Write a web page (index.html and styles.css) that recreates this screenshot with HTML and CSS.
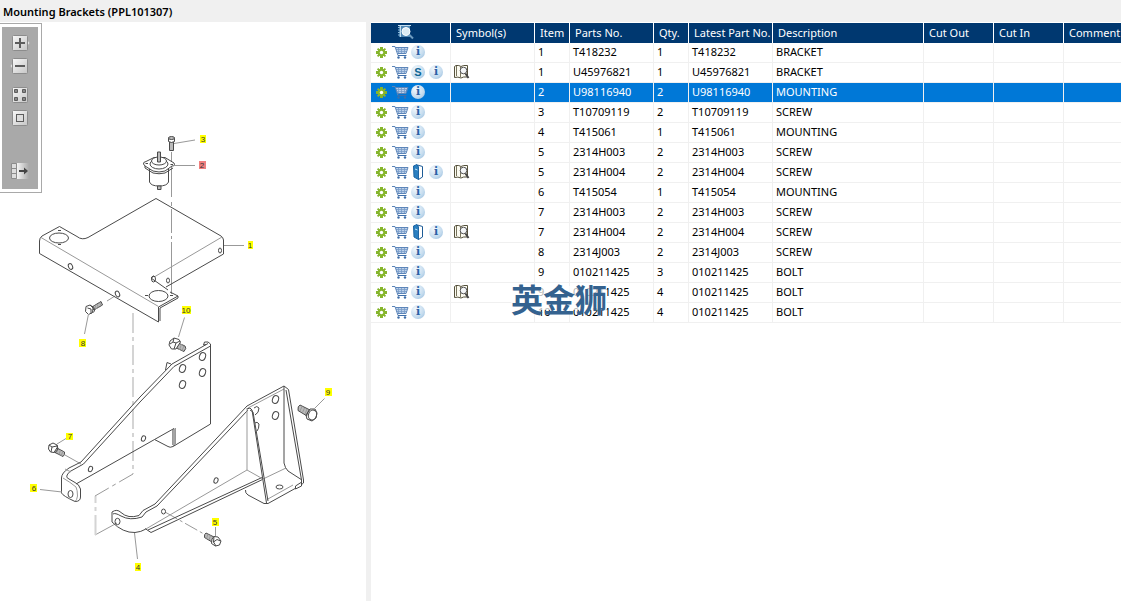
FILE: index.html
```
<!DOCTYPE html>
<html lang="en">
<head>
    <meta charset="UTF-8">
    <meta name="viewport" content="width=device-width, initial-scale=1.0">
    <title>Mounting Brackets (PPL101307)</title>
    <link rel="stylesheet" href="styles.css">
</head>
<body>
    <!-- Icon set -->
    <svg class="icon-set" aria-hidden="true">
        <defs>
            <linearGradient id="btnFill" x1="0" y1="0" x2="1" y2="1">
                <stop offset="0" stop-color="#f8f8f8"/>
                <stop offset="1" stop-color="#c6c6c6"/>
            </linearGradient>
            <linearGradient id="fadeFill" x1="0" y1="0" x2="1" y2="0">
                <stop offset="0" stop-color="#f4f4f4"/>
                <stop offset="1" stop-color="#a9a9a9"/>
            </linearGradient>
        </defs>
        <symbol id="gear" viewBox="0 0 18 16">
            <g fill="#86b52c">
                <rect x="7" y="3" width="3" height="11"/>
                <rect x="3" y="7" width="11" height="3"/>
                <rect x="7.500" y="3" width="2" height="11" transform="rotate(45 8.5 8.5)"/>
                <rect x="7.500" y="3" width="2" height="11" transform="rotate(-45 8.5 8.5)"/>
                <circle cx="8.5" cy="8.5" r="3.8"/>
            </g>
            <circle class="gear-hole" cx="8.5" cy="8.5" r="1.7"/>
        </symbol>
        <symbol id="cart" viewBox="0 0 18 16">
            <path d="M4.500 3.500H16.500L14.500 9H6.500Z" fill="#bcd0ea"/>
            <path d="M5 5.500H16M5.500 7.500H15.500M7.500 3.500V9M10.500 3.500V9M13.500 3.500V9" fill="none" stroke="#7a9cc8" stroke-width=".8"/>
            <path d="M1 2.500H4L7 11.500M4.500 3.500H17L15 9.500H6.500" fill="none" stroke="#5c85b9"/>
            <path d="M7 11.500H15.500" fill="none" stroke="#3f6ea8"/>
            <circle cx="7.500" cy="13.500" r="1.200" fill="#3f6ea8"/>
            <circle cx="14" cy="13.500" r="1.200" fill="#3f6ea8"/>
        </symbol>
        <symbol id="book" viewBox="0 0 18 16">
            <path d="M8.500 1L13.500 2.500V13L9.500 15.500Z" fill="#fff" stroke="#1d5b96"/>
            <path d="M4.500 2L8 .500 9.500 3V15.500L5 13Z" fill="#2a7fc0" stroke="#1e66a5"/>
            <path d="M6 5L8.500 6" stroke="#bfe0f5"/>
        </symbol>
        <symbol id="lookup" viewBox="0 0 18 16">
            <path d="M1.500 2.500L3 1.500Q6 1 8 2.500Q10 1 14.500 1.500V13Q10 12.500 8 14Q5 12.500 1.500 13.500Z" fill="#fbfaf0" stroke="#55513c"/>
            <path d="M3.500 2V12M7.500 3V13" fill="none" stroke="#77735c"/>
            <circle cx="10.500" cy="6.500" r="3.300" fill="#f3f5f7" stroke="#555"/>
            <path d="M12.500 9.500L15.500 14" stroke="#444" stroke-width="2"/>
        </symbol>
        <symbol id="search" viewBox="0 0 18 16">
            <path d="M2 1H13V13H2Z" fill="#4f87b5"/>
            <path d="M1 1.500H14M3.500 2V13" stroke="#c3dced"/>
            <path d="M1 3.500H3M1 6H3M1 8.500H3M1 11H3" stroke="#8bb8d8"/>
            <circle cx="9" cy="7.500" r="4" fill="#dbeaf4" stroke="#fff"/>
            <path d="M12 10.500L16 14.500" stroke="#6f9cc0" stroke-width="2"/>
        </symbol>
    </svg>

    <header class="title-bar">
        <h1>Mounting Brackets (PPL101307)</h1>
    </header>

    <main class="viewer">
        <!-- Drawing -->
        <section class="drawing-pane">
            <svg class="drawing" viewBox="0 22 366 579" role="img" aria-label="Exploded view">
                <!-- centre lines -->
                <g class="centre">
                    <path d="M171.500 152V197M171.500 202V206M171.500 209V233M171.500 236V239M171.500 242V294"/>
                    <path d="M107 301L115 296M95 535L117 523"/>
                    <path d="M65 455L81 464"/>
                    <path d="M165 512L204 534" stroke-dasharray="14 3 3 3"/>
                    <path class="centre-wide" d="M133 313V474" stroke-dasharray="20 4 4 4"/>
                    <path class="centre-wide" d="M95.500 535V496" stroke-dasharray="20 4 4 4"/>
                    <path d="M133 474L95 496" stroke-dasharray="16 4 4 4"/>
                </g>

                <!-- 1: bracket plate -->
                <path class="line" d="M166 287L223.500 254V240Q223 237 221 236L156 198.500L88 237.500Q82 240.500 77 236.500L59.500 226.500L42 236Q39.500 238 39.500 241V253.500L158.500 322V307L178 296L170 292"/>
                <path class="thin" d="M41 237.500L158.500 306.500M222 237L155 276.500"/>
                <path class="line" d="M151 278L168 290M151 278L154 276M178 296V298L160 308V321"/>
                <ellipse class="line" cx="59" cy="238" rx="9.500" ry="5"/>
                <ellipse class="line" cx="158.500" cy="296" rx="9.500" ry="5.500"/>
                <ellipse class="line" cx="153.500" cy="279" rx="2" ry="3"/>
                <ellipse class="line" cx="168" cy="280.500" rx="1.500" ry="2.500"/>
                <ellipse class="line" cx="220" cy="250.500" rx="1.500" ry="2.500"/>
                <ellipse class="line" cx="70.500" cy="266.500" rx="2" ry="3" transform="rotate(-25 70.500 266.500)"/>
                <ellipse class="line" cx="117.500" cy="294" rx="2" ry="3" transform="rotate(-25 117.500 294)"/>
                <path class="line" d="M58 230.500H61M58 244.500H61M145 295.500H148M170 295.500H173"/>

                <!-- 2: mounting -->
                <path class="line" d="M149.500 169V182Q151 186 159 186T168.500 182V169"/>
                <path class="solid" d="M143.500 164Q143 162 146 161.500L154 157.500H165L174 163Q175.500 166 172 166L165 171Q159 173 153 171L145 166Z"/>
                <path class="line" d="M145 166V168L153 173Q159 174.500 165 173L173 168"/>
                <ellipse class="solid" cx="159" cy="164" rx="9" ry="5"/>
                <ellipse class="solid" cx="159" cy="161" rx="7.500" ry="4"/>
                <path class="shaded" d="M157.500 152H160.500V162H157.500ZM157.500 186H161V189.500H157.500Z"/>
                <path class="line" d="M145.500 163.500H148M170.500 164.500H173"/>

                <!-- 3: socket screw -->
                <path class="shaded" d="M169.500 142H173.500V150.500H169.500Z"/>
                <path class="solid" d="M168.500 138V141.500Q171.500 143.500 174.500 141.500V138Z"/>
                <ellipse class="shaded" cx="171.500" cy="138" rx="3" ry="1.500"/>

                <!-- 8: screw -->
                <path class="shaded" d="M92 307L101 301.500L102.500 305L94 310Z"/>
                <path class="thin" d="M95 305L96.500 309M97 304L98.500 307.500M99.500 302.500L101 306"/>
                <path class="solid" d="M86 306.500L90 305L93 308L92.500 312.500L88.500 314.500L85.500 311.500Z"/>
                <path class="line" d="M90 305L94 307.500L94.500 311L92.500 313M87.500 308L91 309V314"/>

                <!-- 6: bracket -->
                <path class="line" d="M208 343.500L172 364L140 397L81 462L69 468Q61.500 473 61.500 478V493Q63 496 75 501.500Q80.500 501.500 80.500 497V489Q79 484 75 482.500L69 479Q64 477 70 471.500L83.500 464L140 402L174 366.500L210.500 346V424L173 446.500Q170 448 168 446.500L154.500 439.500L174 428.500V446"/>
                <path class="line" d="M154.500 439.500L76 484M206 344.500L203.500 345L204.500 342L208 342L210.500 344V346"/>
                <path class="thin" d="M63 478Q70 482 76 487Q77.500 490 77.500 496Q77 500 75 501.500M175.500 428V446M172.500 430V445M65 469L71 472"/>
                <path class="line" d="M165.500 370L167 362.500L171 364"/>
                <g class="line">
                    <ellipse cx="202.500" cy="356.500" rx="3" ry="4" transform="rotate(20 202.500 356.500)"/>
                    <ellipse cx="202.500" cy="372.500" rx="3" ry="4" transform="rotate(20 202.500 372.500)"/>
                    <ellipse cx="182.500" cy="368.500" rx="3" ry="4" transform="rotate(20 182.500 368.500)"/>
                    <ellipse cx="182.500" cy="384.500" rx="3" ry="4" transform="rotate(20 182.500 384.500)"/>
                    <ellipse cx="143.500" cy="438.500" rx="2" ry="2.800" transform="rotate(20 143.500 438.500)"/>
                    <ellipse cx="90.500" cy="469" rx="2" ry="2.800" transform="rotate(20 90.500 469)"/>
                    <ellipse cx="70.500" cy="494" rx="2.500" ry="3.500"/>
                </g>

                <!-- 10: bolt -->
                <path class="shaded" d="M176 342L185 346Q187 348 184 351.500L174 347Z"/>
                <path class="thin" d="M179 343L177 348.500M181.500 344L179.500 350M184 345.500L182 351"/>
                <path class="solid" d="M170 341L174 338L179 339.500L180.500 342L176 349L171.500 349L169 345Z"/>
                <path class="line" d="M174 338L173 342L170 344M173 342L176 343L180 341M176 343L174 349"/>

                <!-- 7: screw -->
                <path class="shaded" d="M55 447L64.500 452Q65 455 63 456.500L54 452Z"/>
                <path class="thin" d="M58 448.500L56.500 453M60.500 450L59 454.500M63 451L61 456"/>
                <path class="solid" d="M49 445L53 443L57 445L57.500 447L54 452.500L50.500 452L48.500 449Z"/>
                <path class="line" d="M49 445L52 447L57 446M52 447L51 452M57 445L58 449L55 453"/>

                <!-- 4: bracket -->
                <path class="line" d="M284 386L247 406L155 504L143 510.500L139 515.500Q128 519 121 512.500Q117 508.500 112 512V522Q123 533 135 532.500Q141 532 146 529"/>
                <path class="line" d="M248 410L157 506L146 512L142 517Q130 521 121 516Q115 512.500 113 514M145 528.500L151 532.500L262.500 479.500M148 530L262 477.500"/>
                <path class="thin" d="M145 529.500L247 470L263 479M247 408V470M248 408L284 389M263 479L286 468M267 499.500L293 485"/>
                <path class="line" d="M247 409L250 408L252 410L266.500 503M250 410L253 412L268 501M284 386V463Q285 468 288 471L302 480M284 386L288.500 389.500L303.500 480V483L301 485M286 390L301.500 480V486L295.500 489V486L301 482.500M245.500 490Q245 493 248 495L264 503.500H268L296 488"/>
                <ellipse class="line" cx="279.500" cy="487" rx="3.500" ry="2"/>
                <g class="line">
                    <ellipse cx="275.500" cy="399.500" rx="3" ry="4" transform="rotate(20 275.500 399.500)"/>
                    <ellipse cx="275.500" cy="415.500" rx="3" ry="4" transform="rotate(20 275.500 415.500)"/>
                    <path d="M254 408Q257 405 259 408Q259 413 255 415M255 423Q257 421 259 424Q259 429 257 431"/>
                    <ellipse cx="216" cy="480.500" rx="2" ry="2.800" transform="rotate(20 216 480.500)"/>
                    <ellipse cx="163.500" cy="511.500" rx="2" ry="2.500"/>
                    <ellipse cx="117.500" cy="521.500" rx="2.500" ry="3.200"/>
                </g>

                <!-- 9: bolt -->
                <path class="shaded" d="M300 405L310 410L307 416L298 410.500Q297.500 406 300 405Z"/>
                <path class="thin" d="M302 406.500L300 411M304.500 408L302.500 412.500M307 409L305 414"/>
                <path class="solid" d="M310 409L315 409L317 413L316 418L312 421L307 419L306 415Z"/>
                <path class="line" d="M310 409L308 412L306.500 416"/>
                <ellipse class="line" cx="312.500" cy="415" rx="4" ry="5" transform="rotate(20 312.500 415)"/>

                <!-- 5: screw -->
                <path class="shaded" d="M206 533L214 537L212 542L204.500 537.500Q204 534 206 533Z"/>
                <path class="thin" d="M208 534L206.500 538.500M210.500 535.500L209 540"/>
                <path class="solid" d="M214 536.500L218 537L221 541L219.500 545L215.500 546L211.500 543.500L212 539Z"/>
                <path class="line" d="M214 536.500L213.500 542L216 546M213.500 542L217 539.500L220.500 541"/>

                <!-- leaders -->
                <path class="leader" d="M174 143.500L195 140M174 165.500H195M224 245.500H244M88.500 314L84.500 334M184.500 317.500L178.500 337M324.500 398.500L315 408M66 438.500L57 444M40 489.500L62 492M134.500 533L137.500 559M215.500 527V536"/>

                <!-- callouts -->
                <g class="callout">
                    <rect x="200" y="135" width="6" height="8"/><text x="203" y="142">3</text>
                    <rect class="picked" x="199" y="161" width="7" height="8"/><text x="202" y="168">2</text>
                    <rect x="248" y="241" width="5" height="8"/><text x="250" y="248">1</text>
                    <rect x="79" y="339" width="7" height="8"/><text x="83" y="346">8</text>
                    <rect x="182" y="306" width="9" height="8"/><text x="186" y="313">10</text>
                    <rect x="325" y="388" width="7" height="8"/><text x="328" y="395">9</text>
                    <rect x="66" y="433" width="7" height="7"/><text x="70" y="439">7</text>
                    <rect x="30" y="484" width="7" height="8"/><text x="34" y="491">6</text>
                    <rect x="135" y="563" width="6" height="8"/><text x="138" y="570">4</text>
                    <rect x="212" y="518" width="7" height="8"/><text x="215" y="525">5</text>
                </g>
            </svg>

            <div class="toolbar">
                <div class="toolbar-inner">
                    <button type="button" aria-label="Zoom in">
                        <svg viewBox="0 0 18 16"><path d="M15 5L17.500 8L15 11Z" fill="#e4e4e4"/><rect x=".5" y=".5" width="15" height="15" rx="1" fill="url(#btnFill)" stroke="#8c8c8c"/><path d="M3 8H13M8 3V13" stroke="#5c5c5c" stroke-width="2"/></svg>
                    </button>
                    <button type="button" aria-label="Zoom out">
                        <svg viewBox="0 0 18 16"><path d="M1 5L-1.500 8L1 11Z" fill="#e4e4e4"/><rect x=".5" y=".5" width="15" height="15" rx="1" fill="url(#btnFill)" stroke="#8c8c8c"/><path d="M3 8H13" stroke="#5c5c5c" stroke-width="2"/></svg>
                    </button>
                    <button type="button" class="group-start" aria-label="Tile view">
                        <svg viewBox="0 0 18 16"><rect x=".5" y=".5" width="15" height="15" rx="1" fill="url(#btnFill)" stroke="#8c8c8c"/><path d="M2.500 2.500H5.500V5.500H2.500ZM10.500 2.500H13.500V5.500H10.500ZM2.500 10.500H5.500V13.500H2.500ZM10.500 10.500H13.500V13.500H10.500Z" fill="#888" stroke="#5c5c5c"/></svg>
                    </button>
                    <button type="button" aria-label="Fit to window">
                        <svg viewBox="0 0 18 16"><rect x=".5" y=".5" width="15" height="15" rx="1" fill="url(#btnFill)" stroke="#8c8c8c"/><rect x="4.500" y="4.500" width="7" height="7" fill="#ddd" stroke="#5c5c5c"/></svg>
                    </button>
                    <button type="button" class="group-end" aria-label="Show list">
                        <svg viewBox="0 0 18 16"><rect x="5" y="0" width="12" height="16" fill="url(#fadeFill)"/><path d="M-.5 .5H4.500V15.500H-.5ZM-.5 5.500H4.500M-.5 10.500H4.500" fill="#ddd" stroke="#8c8c8c"/><path d="M7 8H13" stroke="#444" stroke-width="2"/><path d="M12 4.500L16 8L12 11.500Z" fill="#444"/></svg>
                    </button>
                </div>
            </div>
        </section>

        <!-- Parts list -->
        <section class="parts-pane">
            <table class="parts">
                <colgroup>
                    <col class="col-tools">
                    <col class="col-wide">
                    <col class="col-narrow">
                    <col class="col-wide">
                    <col class="col-narrow">
                    <col class="col-wide">
                    <col class="col-description">
                    <col class="col-cut">
                    <col class="col-cut">
                    <col>
                </colgroup>
                <thead>
                    <tr>
                        <th class="head-search"><button type="button" class="icon" aria-label="Search parts"><svg><use href="#search"/></svg></button></th>
                        <th>Symbol(s)</th>
                        <th>Item</th>
                        <th>Parts No.</th>
                        <th>Qty.</th>
                        <th>Latest Part No.</th>
                        <th>Description</th>
                        <th>Cut Out</th>
                        <th>Cut In</th>
                        <th>Comment</th>
                    </tr>
                </thead>
                <tbody id="partsBody"></tbody>
            </table>
        </section>
        <div class="watermark" lang="zh-CN">英金狮</div>
    </main>

    <script src="script.js"></script>
</body>
</html>
```

FILE: styles.css
```
* {
    box-sizing: border-box;
}

body {
    margin: 0;
    min-height: 100vh;
    display: flex;
    flex-direction: column;
    font-family: "Noto Sans", "Noto Sans CJK SC", sans-serif;
    font-size: 11px;
    color: #000;
    background-color: #fff;
}

button {
    padding: 0;
    border: none;
    background: none;
    cursor: pointer;
}

.icon-set {
    position: absolute;
    width: 0;
    height: 0;
}

.title-bar {
    height: 22px;
    padding: 0 3px;
    background-color: #f0f0f0;
}

.title-bar h1 {
    margin: 0;
    font-size: 11px;
    font-weight: 600;
    line-height: 24px;
}

.viewer {
    position: relative;
    flex: 1;
    display: flex;
}

/* Drawing */
.drawing-pane {
    position: relative;
    flex: 0 0 371px;
    border-right: 5px solid #f0f0f0;
}

.drawing {
    display: block;
    width: 100%;
}

.line,
.solid,
.shaded {
    fill: none;
    stroke: #4a4a4a;
    stroke-linejoin: round;
}

.solid {
    fill: #fff;
}

.shaded {
    fill: #bbb;
}

.thin {
    fill: none;
    stroke: #999;
}

.centre {
    fill: none;
    stroke: #999;
}

.centre-wide {
    stroke: #d4d4d4;
    stroke-width: 2;
}

.leader {
    fill: none;
    stroke: #999;
}

.callout rect {
    fill: #ff0;
}

.callout .picked {
    fill: #f08080;
}

.callout text {
    font-family: "Liberation Sans", Arial, sans-serif;
    font-size: 8px;
    fill: #333;
    text-anchor: middle;
}

.toolbar {
    position: absolute;
    top: 1px;
    left: 0;
    padding: 3px 3px 3px 2px;
    border: 1px solid #a9a9a9;
    border-left: none;
    background-color: #fff;
}

.toolbar-inner {
    display: flex;
    flex-direction: column;
    gap: 7px;
    padding: 8px 8px 10px 10px;
    background-color: #a9a9a9;
}

.toolbar button,
.toolbar svg {
    display: block;
    width: 18px;
    height: 16px;
    overflow: visible;
}

.toolbar .group-start {
    margin-top: 6px;
}

.toolbar .group-end {
    margin-top: 30px;
}

/* Parts list */
.parts-pane {
    flex: 1;
    min-width: 0;
    padding-top: 1px;
    overflow: hidden;
}

.parts {
    width: 100%;
    table-layout: fixed;
    border-collapse: separate;
    border-spacing: 0;
}

.col-tools {
    width: 80px;
}

.col-wide {
    width: 84px;
}

.col-narrow {
    width: 35px;
}

.col-description {
    width: 151px;
}

.col-cut {
    width: 70px;
}

.parts th,
.parts td {
    height: 20px;
    padding: 0 0 2px 3px;
    border-right: 1px solid #f0f0f0;
    line-height: 17px;
    text-align: left;
    white-space: nowrap;
}

.parts th {
    padding-left: 5px;
    border-color: #fff;
    font-weight: normal;
    color: #fff;
    background-color: #003870;
}

.parts td {
    border-bottom: 1px solid #f0f0f0;
}

.parts th:last-child,
.parts td:last-child {
    border-right: none;
}

.parts .head-search {
    padding-left: 26px;
}

.parts .selected td {
    color: #fff;
    background-color: #0078d7;
}

.tools {
    display: flex;
}

.parts td:first-child {
    padding-left: 2px;
}

.parts td:nth-child(2) {
    padding-left: 2px;
}

.icon,
.icon svg {
    display: block;
    width: 18px;
    height: 16px;
}

.gear-hole {
    fill: #fff;
}

.ball {
    width: 14px;
    height: 14px;
    margin: 1px 2px;
    border-radius: 50%;
    font-family: "DejaVu Serif", serif;
    font-size: 11px;
    font-weight: bold;
    line-height: 14px;
    text-align: center;
    color: #2b62a5;
    background: radial-gradient(circle at 35% 30%, #f2f8fd, #c4dbee 60%, #8ab4d8);
}

.ball-super {
    font-family: "Liberation Sans", Arial, sans-serif;
    color: #0e6594;
}

.watermark {
    position: absolute;
    top: 264px;
    left: 511px;
    font-family: "Noto Sans CJK SC", sans-serif;
    font-size: 32px;
    font-weight: bold;
    line-height: 24px;
    color: #34628f;
    background-color: rgba(255, 255, 255, 0.7);
    pointer-events: none;
}
```

FILE: script.js
```
// icons, symbol, item, part number, quantity, description
const parts = [
    [[], false, '1', 'T418232', 1, 'BRACKET'],
    [['super'], true, '1', 'U45976821', 1, 'BRACKET'],
    [[], false, '2', 'U98116940', 2, 'MOUNTING'],
    [[], false, '3', 'T10709119', 2, 'SCREW'],
    [[], false, '4', 'T415061', 1, 'MOUNTING'],
    [[], false, '5', '2314H003', 2, 'SCREW'],
    [['book'], true, '5', '2314H004', 2, 'SCREW'],
    [[], false, '6', 'T415054', 1, 'MOUNTING'],
    [[], false, '7', '2314H003', 2, 'SCREW'],
    [['book'], true, '7', '2314H004', 2, 'SCREW'],
    [[], false, '8', '2314J003', 2, 'SCREW'],
    [[], false, '9', '010211425', 3, 'BOLT'],
    [[], true, '9', '010211425', 4, 'BOLT'],
    [[], false, '10', '010211425', 4, 'BOLT']
];

const selectedRow = 2;

const labels = {
    gear: 'Options',
    cart: 'Add to cart',
    super: 'Superseded',
    book: 'Catalogue',
    info: 'Information',
    lookup: 'Look up'
};

// round icons that hold a letter
const letters = { info: 'i', super: 'S' };

function icon(name) {
    if (letters[name]) {
        return `<button type="button" class="ball ball-${name}" aria-label="${labels[name]}">${letters[name]}</button>`;
    }
    return `<button type="button" class="icon" aria-label="${labels[name]}"><svg><use href="#${name}"/></svg></button>`;
}

document.getElementById('partsBody').innerHTML = parts.map(([extra, symbol, item, number, qty, description], i) => `
    <tr class="${i === selectedRow ? 'selected' : ''}">
        <td><div class="tools">${['gear', 'cart', ...extra, 'info'].map(icon).join('')}</div></td>
        <td>${symbol ? icon('lookup') : ''}</td>
        <td>${item}</td>
        <td>${number}</td>
        <td>${qty}</td>
        <td>${number}</td>
        <td>${description}</td>
        <td></td>
        <td></td>
        <td></td>
    </tr>`).join('');
```
